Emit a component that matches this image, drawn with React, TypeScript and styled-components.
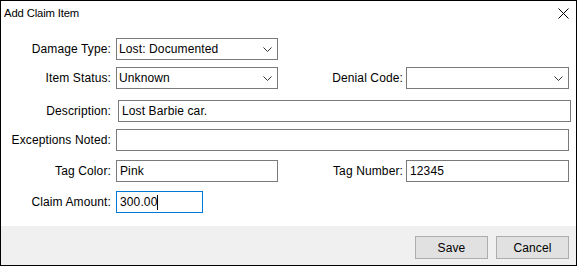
import styled, { createGlobalStyle } from 'styled-components';

const GlobalStyle = createGlobalStyle`
  html, body {
    margin: 0;
    padding: 0;
    background: #ffffff;
  }
  * {
    box-sizing: border-box;
  }
`;

function Chevron() {
  return (
    <svg width="9" height="5" viewBox="0 0 9 5">
      <polyline points="0.5,0.5 4.5,4.5 8.5,0.5" fill="none" stroke="#333" strokeWidth="1" />
    </svg>
  );
}

function CloseIcon() {
  return (
    <svg width="11" height="11" viewBox="0 0 11 11">
      <path d="M0.5 0.5 L10.5 10.5 M10.5 0.5 L0.5 10.5" stroke="#000" strokeWidth="1" />
    </svg>
  );
}

function App() {
  return (
    <>
      <GlobalStyle />
      <Window>
        <TitleBar>
          <Title>Add Claim Item</Title>
          <CloseButton>
            <CloseIcon />
          </CloseButton>
        </TitleBar>

        <Body>
          <Row $top={0}>
            <Label>Damage Type:</Label>
            <Select $width={162}>
              <span>Lost: Documented</span>
              <Chevron />
            </Select>
          </Row>

          <Row $top={7}>
            <Label>Item Status:</Label>
            <Select $width={162}>
              <span>Unknown</span>
              <Chevron />
            </Select>
            <SideLabel>Denial Code:</SideLabel>
            <Select $width={163}>
              <span></span>
              <Chevron />
            </Select>
          </Row>

          <Row $top={11}>
            <Label>Description:</Label>
            <WideField $shift={2}>Lost Barbie car.</WideField>
          </Row>

          <Row $top={7}>
            <Label>Exceptions Noted:</Label>
            <WideField $shift={0}></WideField>
          </Row>

          <Row $top={9}>
            <Label>Tag Color:</Label>
            <Field $width={162}>Pink</Field>
            <SideLabel>Tag Number:</SideLabel>
            <Field $width={163}>12345</Field>
          </Row>

          <Row $top={9}>
            <Label>Claim Amount:</Label>
            <Field $width={87} $focused>
              300.00<Caret />
            </Field>
          </Row>
        </Body>

        <Footer>
          <Button>Save</Button>
          <Button>Cancel</Button>
        </Footer>
      </Window>
    </>
  );
}

export default App;

const Window = styled.div`
  width: 577px;
  height: 266px;
  border: 1px solid #000;
  background: #fff;
  display: flex;
  flex-direction: column;
  font-family: 'Liberation Sans', Arial, sans-serif;
  font-size: 12px;
  letter-spacing: 0.12px;
  color: #000;
`;

const TitleBar = styled.div`
  height: 24px;
  display: flex;
  align-items: center;
  justify-content: space-between;
  padding: 0 7px 0 3px;
`;

const Title = styled.div`
  font-family: 'Liberation Sans', Arial, sans-serif;
  font-size: 11.3px;
  letter-spacing: -0.15px;
  line-height: 24px;
`;

const CloseButton = styled.div`
  display: flex;
  align-items: center;
  justify-content: center;
  width: 11px;
  height: 11px;
  margin-top: 1px;
`;

const Body = styled.div`
  flex: 1;
  display: flex;
  flex-direction: column;
  padding: 13px 7px 0 0;
`;

const Row = styled.div<{ $top: number }>`
  display: flex;
  align-items: center;
  height: 22px;
  margin-top: ${(p) => p.$top}px;
`;

const Label = styled.div`
  width: 115px;
  padding-right: 5px;
  text-align: right;
  white-space: nowrap;
`;

const SideLabel = styled.div`
  flex: 1;
  padding-right: 3px;
  text-align: right;
  white-space: nowrap;
`;

const Select = styled.div<{ $width: number }>`
  width: ${(p) => p.$width}px;
  height: 22px;
  border: 1px solid #7a7a7a;
  display: flex;
  align-items: center;
  justify-content: space-between;
  padding: 0 5px 0 2px;
  background: #fff;
`;

const Field = styled.div<{ $width: number; $focused?: boolean }>`
  width: ${(p) => p.$width}px;
  height: 22px;
  border: 1px solid ${(p) => (p.$focused ? '#0078d7' : '#7a7a7a')};
  display: flex;
  align-items: center;
  padding: 0 3px;
  background: #fff;
`;

const WideField = styled.div<{ $shift: number }>`
  flex: 1;
  height: 22px;
  border: 1px solid #7a7a7a;
  display: flex;
  align-items: center;
  padding: 0 3px;
  margin-left: ${(p) => p.$shift}px;
  margin-right: ${(p) => -p.$shift}px;
`;

const Caret = styled.span`
  display: inline-block;
  width: 1px;
  height: 15px;
  background: #000;
`;

const Footer = styled.div`
  height: 39px;
  background: #f0f0f0;
  display: flex;
  justify-content: flex-end;
  align-items: flex-start;
  gap: 8px;
  padding: 10px 7px 0 0;
`;

const Button = styled.button`
  width: 73px;
  height: 23px;
  border: 1px solid #adadad;
  background: #e1e1e1;
  font-family: 'Liberation Sans', Arial, sans-serif;
  font-size: 12px;
  letter-spacing: 0.12px;
  color: #000;
  padding: 0;
`;
